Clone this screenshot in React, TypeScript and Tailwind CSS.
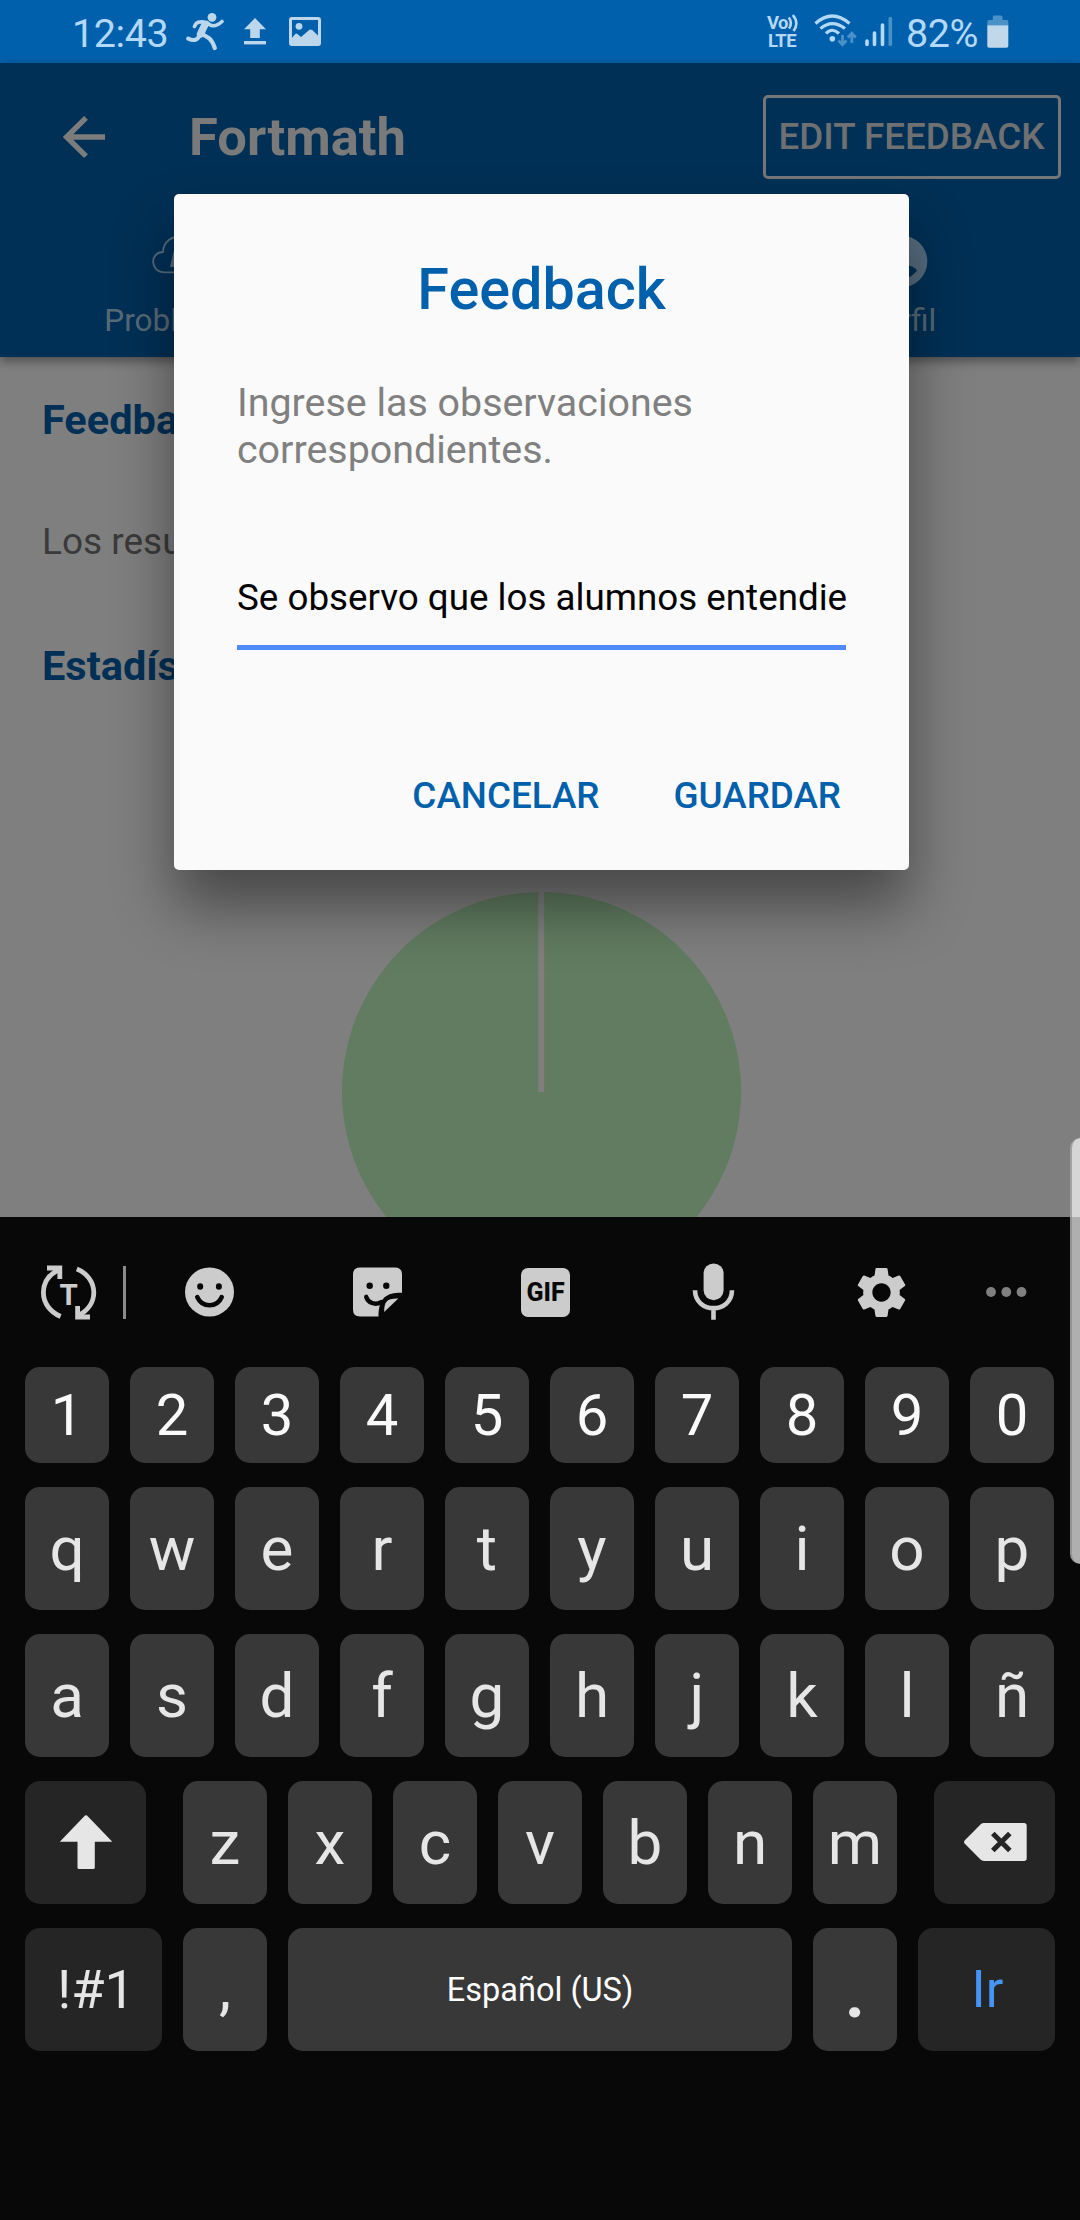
import React from "react";
import { MdSettings } from "react-icons/md";

function StatusBar() {
  return (
    <div className="flex h-[63px] shrink-0 items-center bg-[#0060ab] text-[#b3d9f8]">
      <span className="ml-[72px] w-[98px] pt-[5px] text-[39.5px] leading-none tracking-[-0.4px]">12:43</span>
      <svg className="ml-[16px]" width="38" height="63" viewBox="186 0 38 63" fill="none" stroke="#bcd7ec" strokeLinecap="round" strokeLinejoin="round">
        <circle cx="212" cy="17.3" r="4.4" fill="#bcd7ec" stroke="none" />
        <path d="M194.5 26.5 C196 22 199 21 207 22.5 C210 26 215 28 222 21.5" strokeWidth="3.6" />
        <path d="M204.8 25 L200.5 34" strokeWidth="7.4" />
        <path d="M200 35 C197 41 193 41 188.2 38.6" strokeWidth="4" />
        <path d="M203 34.5 L209.5 38.5 C212 41 213.5 44 214.8 48" strokeWidth="4.2" />
      </svg>
      <svg className="ml-[20px]" width="22" height="63" viewBox="244 0 22 63" fill="#bcd7ec">
        <path d="M255 18 L266 29.2 H259.8 V38 H250.2 V29.2 H244 Z" />
        <rect x="244" y="41" width="22" height="3.4" />
      </svg>
      <svg className="ml-[23px]" width="32" height="63" viewBox="289 0 32 63">
        <rect x="290.5" y="18.4" width="29" height="26" rx="1.5" fill="none" stroke="#bcd7ec" strokeWidth="3" />
        <circle cx="299" cy="26.3" r="3.4" fill="#bcd7ec" />
        <path d="M291 39 L295.3 34 Q296.5 33 298 34.5 L301 37 L309.5 29.8 Q311 29 312.5 30.3 L320 37.5 V45 H291 Z" fill="#bcd7ec" />
      </svg>
      <div className="ml-[446px] flex w-[33px] flex-col pt-[1px] text-[18.5px] font-bold leading-[18px]">
        <span className="flex tracking-[-0.7px]">
          Vo
          <svg width="11" height="18" viewBox="787 15 11 18" fill="none" stroke="#b3d9f8" strokeWidth="2.6" className="shrink-0">
            <path d="M787.8 18.5 Q791.8 24 788 29.5 M791.8 16 Q798.5 24 792.5 32" />
          </svg>
        </span>
        <span className="pl-[1px] tracking-[-0.6px]">LTE</span>
      </div>
      <svg className="ml-[14px]" width="43" height="63" viewBox="814 0 43 63" fill="none" stroke="#b3d9f8">
        <path d="M815.5 23.5 Q832 8.5 849.5 23.5" strokeWidth="3.2" />
        <path d="M820.5 28.6 Q832 18.5 845 28.6" strokeWidth="3.2" />
        <path d="M826 33.5 Q832 27 839 33.5" strokeWidth="3.2" />
        <circle cx="832.3" cy="38.7" r="2.8" fill="#b3d9f8" stroke="none" />
        <path d="M842.5 35 V43.5 M838.5 40.5 L842.5 44.8 L846.5 40.5 M851.8 43 V34 M847.8 37.5 L851.8 33.2 L855.8 37.5" stroke="#4a91c8" strokeWidth="2.8" />
      </svg>
      <svg className="ml-[8px]" width="28" height="63" viewBox="865 0 28 63" strokeWidth="3.6" strokeLinecap="round">
        <path d="M867 41 V44.5 M874.5 33 V44.5 M882.5 25 V44.5" stroke="#b3d9f8" />
        <path d="M890.3 18.5 V44.5" stroke="#4a91c8" />
      </svg>
      <span className="ml-[13px] w-[74px] pt-[5px] text-[39.5px] leading-none tracking-[-0.4px]">82%</span>
      <svg className="ml-[7px]" width="22" height="63" viewBox="987 0 22 63">
        <path d="M992.8 20 V17 Q992.8 15.5 994.3 15.5 H1001 Q1002.5 15.5 1002.5 17 V20 H1007 Q1008.3 20 1008.3 21.5 V25.3 H987.3 V21.5 Q987.3 20 988.8 20 Z" fill="#4a91c8" />
        <path d="M987.3 25.2 H1008.3 V46 Q1008.3 47.8 1006.5 47.8 H989 Q987.3 47.8 987.3 46 Z" fill="#c0d8ea" />
      </svg>
    </div>
  );
}

function AppHeader() {
  return (
    <header className="relative flex h-[294px] shrink-0 flex-col bg-[#003056] shadow-[0_4px_10px_rgba(0,0,0,0.4)]">
      <div className="flex h-[148px] items-center">
        <svg className="ml-[62px]" width="44" height="44" viewBox="62 114.5 44 44" fill="none" stroke="#7c7c7c" strokeWidth="5.4">
          <path d="M105 136.5 H67 M86 117.3 L66.6 136.5 L86 155.7" />
        </svg>
        <h1 className="ml-[83px] text-[52.5px] font-bold leading-none text-[#7a7a7a]">Fortmath</h1>
        <button className="ml-auto mr-[19px] flex h-[84px] w-[298px] items-center justify-center rounded-[5px] border-[3px] border-[#757678] pr-px text-[36.8px] font-medium text-[#6f7072]">
          EDIT FEEDBACK
        </button>
      </div>
      <div className="grid flex-1 grid-cols-3 text-[31.5px] text-[#586a78]">
        <div className="flex flex-col items-center pt-[24px]">
          <svg width="56" height="54" viewBox="152 235 56 54" fill="none" stroke="#566d7f" strokeWidth="1.8">
            <path d="M165 272.4 H195 C210 272 210 252 197 251 C198 233 164 230 163 252 C150 252 149 272 165 272.4 Z" />
            <path d="M170 267 L174 250 H184 L180 261 H188 L174 285 L178 267 Z" fill="#566d7f" stroke="none" />
          </svg>
          <span className="mt-[14px] leading-[36px]">Problemas</span>
        </div>
        <div />
        <div className="flex flex-col items-center pt-[24px]">
          <svg width="56" height="54" viewBox="872 235 56 54">
            <circle cx="901.3" cy="261.4" r="26" fill="#566d7f" />
            <path d="M886 270 Q894 263 905 264.5 Q914 266 917 270.5 Q912 277 905 279 Q893 280 886 270 Z" fill="#003056" />
          </svg>
          <span className="mt-[14px] leading-[36px]">Perfil</span>
        </div>
      </div>
    </header>
  );
}

function Content() {
  return (
    <main className="flex h-[860px] shrink-0 flex-col overflow-hidden bg-[#7f7f7f] pl-[42px] pt-[38px]">
      <h2 className="text-[41.5px] font-bold leading-[50px] text-[#003056]">Feedback</h2>
      <p className="mt-[72px] text-[37px] leading-[50px] text-[#3a3a3a]">Los resultados</p>
      <h2 className="mt-[74px] text-[41.5px] font-bold leading-[50px] text-[#003056]">Estadísticas</h2>
      <svg className="ml-[299px] mt-[200px] shrink-0" width="401" height="401" viewBox="0 0 401 401">
        <circle cx="200.5" cy="200.5" r="199.5" fill="#617c61" />
        <rect x="197.2" y="0" width="6" height="201" fill="#7f7f7f" />
      </svg>
    </main>
  );
}

function Dialog() {
  return (
    <section className="absolute left-[174px] top-[194px] z-10 flex h-[676px] w-[735px] flex-col rounded-[5px] bg-[#fafafa] px-[63px] shadow-[0_36px_60px_rgba(0,0,0,0.44)]">
      <h2 className="mt-[61px] text-center text-[57.5px] font-medium leading-[70px] text-[#0060ab]">Feedback</h2>
      <p className="mt-[54px] text-[39.4px] leading-[47px] text-[#808080]">
        Ingrese las observaciones
        <br />
        correspondientes.
      </p>
      <div className="mt-[100px] h-[77px] w-[609px] whitespace-nowrap border-b-[5px] border-[#4e8bf8] text-[36.75px] leading-[50px] text-black">
        Se observo que los alumnos entendie
      </div>
      <div className="mt-[121px] flex justify-end gap-[74px] pr-[5px] text-[36.8px] font-medium leading-[50px] text-[#0060ab]">
        <button>CANCELAR</button>
        <button>GUARDAR</button>
      </div>
    </section>
  );
}

function Toolbar() {
  return (
    <div className="flex h-[150px] items-center text-[#cccccc]">
      <svg className="ml-[39px]" width="60" height="60" viewBox="39 1262 60 60" fill="none" stroke="currentColor" strokeWidth="4.8">
        <path d="M60.6 1316.5 C50 1312 43.4 1303 43.4 1292.5 C43.4 1283 49 1274.5 59 1269.5" />
        <path d="M76.8 1269 C87 1273 93.8 1282 93.8 1292.5 C93.8 1302 88 1310.5 78.5 1315.5" />
        <path d="M47 1268 H59.8 V1279 M90 1317 H77.6 V1306" />
        <text x="68.6" y="1304.6" textAnchor="middle" fontSize="29.5" fontWeight="700" fill="currentColor" stroke="none">T</text>
      </svg>
      <div className="ml-[24px] h-[53px] w-[3px] bg-[#8a8a8a]" />
      <svg className="ml-[59px]" width="49" height="50" viewBox="185 1266.5 49 50">
        <circle cx="209.5" cy="1291.5" r="24.5" fill="currentColor" />
        <ellipse cx="200.2" cy="1286" rx="3" ry="3.2" fill="#080808" />
        <ellipse cx="218.9" cy="1286" rx="3" ry="3.2" fill="#080808" />
        <path d="M197.3 1296.7 C202 1307.5 217 1307.5 221.7 1296.7" fill="none" stroke="#080808" strokeWidth="4.6" strokeLinecap="round" />
      </svg>
      <svg className="ml-[119px]" width="49" height="50" viewBox="353 1266.5 49 50">
        <path d="M360 1267 H395 Q402 1267 402 1274 V1292.3 C388 1292 378.5 1296 378.5 1316 H360 Q353 1316 353 1309 V1274 Q353 1267 360 1267 Z" fill="currentColor" />
        <path d="M384.2 1311.5 C384 1301 387 1297.7 398.3 1298 Z" fill="currentColor" />
        <ellipse cx="369.7" cy="1285.3" rx="3.2" ry="3.3" fill="#080808" />
        <ellipse cx="386.3" cy="1285.3" rx="3.2" ry="3.3" fill="#080808" />
        <path d="M366.2 1296.3 C368 1302.5 375 1305 381 1301.6" fill="none" stroke="#080808" strokeWidth="4.4" strokeLinecap="round" />
      </svg>
      <div className="ml-[119px] flex h-[49px] w-[49px] items-center justify-center rounded-[7px] bg-[#cccccc] text-[25px] font-extrabold leading-none text-[#080808]">GIF</div>
      <svg className="ml-[122px]" width="43" height="60" viewBox="692 1262 43 60" fill="none">
        <rect x="703.6" y="1263.4" width="20" height="36.8" rx="10" fill="currentColor" />
        <path d="M695 1290.3 C695.3 1314 731.7 1314 732 1290.3 M713.5 1307 V1319.8" stroke="currentColor" strokeWidth="4.6" />
      </svg>
      <MdSettings size={61} className="ml-[116px] shrink-0" />
      <svg className="ml-[73px] shrink-0" width="42" height="12" viewBox="0 0 42 12" fill="#808080">
        <circle cx="6" cy="6" r="4.9" />
        <circle cx="21.3" cy="6" r="4.9" />
        <circle cx="36.5" cy="6" r="4.9" />
      </svg>
    </div>
  );
}

function KeyRow({ keys }: { keys: string }) {
  return (
    <div className="flex h-[123px] gap-[21px]">
      {keys.split("").map((k) => (
        <div key={k} className="flex w-[84px] justify-center rounded-[15px] bg-[#383838] pt-[31px] text-[62px] leading-[62px] text-[#e6e6e6]">
          {k}
        </div>
      ))}
    </div>
  );
}

function Keyboard() {
  return (
    <div className="flex flex-1 flex-col bg-[#080808]">
      <Toolbar />
      <div className="flex flex-col gap-[24px] px-[25px]">
        <div className="flex h-[96px] gap-[21px]">
          {"1234567890".split("").map((k) => (
            <div key={k} className="flex w-[84px] items-center justify-center rounded-[15px] bg-[#383838] text-[58px] leading-none text-[#fafafa]">
              {k}
            </div>
          ))}
        </div>
        <KeyRow keys="qwertyuiop" />
        <KeyRow keys="asdfghjklñ" />
        <div className="flex h-[123px] gap-[37px]">
          <div className="flex w-[121px] justify-center rounded-[15px] bg-[#252525] pt-[34px]">
            <svg width="54" height="55" viewBox="0 0 54 55" fill="#e6e6e6">
              <path d="M26 0.6 Q27 -0.2 28 0.6 L53.3 26.8 H35.8 V52.5 Q35.8 54 34.3 54 H20 Q18.5 54 18.5 52.5 V26.8 H0.8 Z" />
            </svg>
          </div>
          <KeyRow keys="zxcvbnm" />
          <div className="flex w-[121px] justify-center rounded-[15px] bg-[#252525] pl-[2px] pt-[42px]">
            <svg width="63" height="39" viewBox="963 1823 63 39">
              <path d="M963.6 1840.5 L979.5 1824.4 Q981 1823 983 1823 H1023 Q1025.7 1823 1025.7 1825.7 V1858.3 Q1025.7 1861 1023 1861 H983 Q981 1861 979.5 1859.6 L963.6 1843.5 Q962.5 1842 963.6 1840.5 Z" fill="#e6e6e6" />
              <path d="M991.8 1833.5 L1008.8 1850.5 M1008.8 1833.5 L991.8 1850.5" stroke="#252525" strokeWidth="5" />
            </svg>
          </div>
        </div>
        <div className="flex h-[123px] gap-[21px]">
          <div className="flex w-[137px] justify-center rounded-[15px] bg-[#252525] pl-[5px] pt-[31px] text-[54px] leading-[62px] text-[#e6e6e6]">!#1</div>
          <div className="flex w-[84px] justify-center rounded-[15px] bg-[#383838] pt-[29px] text-[61px] leading-[62px] text-[#e6e6e6]">,</div>
          <div className="flex w-[504px] items-center justify-center rounded-[15px] bg-[#383838] pt-[2px] text-[32.5px] text-white">Español (US)</div>
          <div className="flex w-[84px] justify-center rounded-[15px] bg-[#383838] pt-[34px] text-[70px] font-bold leading-[62px] text-[#e6e6e6]">.</div>
          <div className="flex w-[137px] justify-center rounded-[15px] bg-[#252525] pl-[2px] pt-[31px] text-[52px] leading-[62px] text-[#4595f8]">Ir</div>
        </div>
      </div>
    </div>
  );
}

export default function App() {
  return (
    <div className="relative flex h-[2220px] w-[1080px] flex-col overflow-hidden font-['Roboto',sans-serif]">
      <StatusBar />
      <AppHeader />
      <Content />
      <Keyboard />
      <Dialog />
      <div className="absolute right-0 top-[1138px] z-20 h-[426px] w-[10px] rounded-l-[12px] border-l-2 border-[#808080]/60 bg-white/68" />
    </div>
  );
}
